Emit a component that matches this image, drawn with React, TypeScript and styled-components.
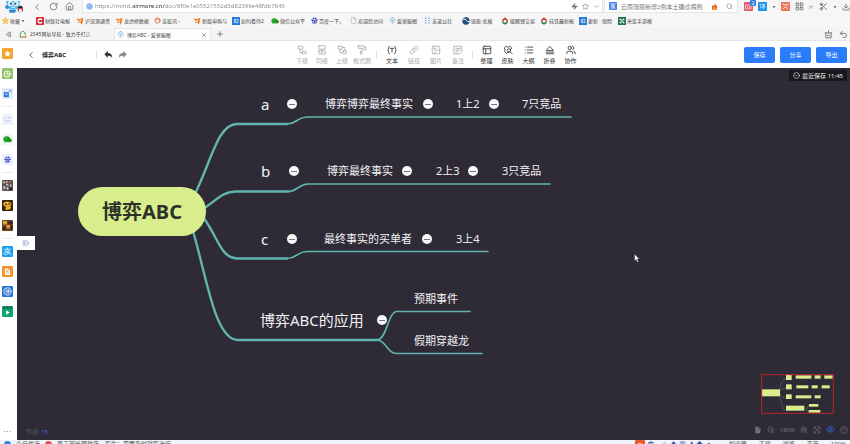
import React from "react";
import styled, { createGlobalStyle, css } from "styled-components";
import {
  ChevronLeft, ChevronDown, RotateCw, House, Zap, Star, Search, LayoutGrid, ChevronsRight, Scissors,
  Download, X, Plus, Undo2, Image as ImageIcon, PaintRoller, PanelsTopLeft,
  List, Users, CircleCheck, ZoomIn, ZoomOut, Eye, CircleHelp, File as FileIcon,
} from "lucide-react";

const ink = "#2e2b36";
const teal = "#62b5af";
const lime = "#d8ed8c";
const blue = "#2b7cfb";

const GlobalStyle = createGlobalStyle`
  * { box-sizing: border-box; }
  html, body { margin: 0; height: 100%; overflow: hidden; }
  body { font-family: "Noto Sans", "Noto Sans CJK SC", sans-serif; font-size: 6px; line-height: 8px; color: #444; background: #f6f6f6; }
  #root { height: 100%; }
  button { font: inherit; color: inherit; background: none; border: 0; padding: 0; margin: 0; display: inline-flex; align-items: center; justify-content: center; }
  input { font: inherit; color: inherit; border: 0; padding: 0; margin: 0; background: none; outline: none; min-width: 0; }
  a { color: inherit; text-decoration: none; }
  svg { display: block; flex: none; }
`;

const Window = styled.div`
  height: 100vh;
  display: flex;
  flex-direction: column;
`;

/* ---------- browser chrome ---------- */

const AddressRow = styled.div`
  height: 13px;
  flex: none;
  display: flex;
  align-items: center;
  padding: 0 0 0 4px;
  color: #777;
`;
const NavButtons = styled.nav`
  display: flex;
  gap: 7px;
  padding: 0 8px 0 8px;
  color: #666;
`;
const AddressBox = styled.label`
  flex: 1;
  height: 13px;
  display: flex;
  align-items: center;
  gap: 2px;
  padding: 0 2px 0 3px;
  background: #fff;
  border: 1px solid #e4e4e4;
  border-top: 0;
`;
const UrlInput = styled.input`
  flex: 1;
  height: 10px;
  color: transparent;
  background: linear-gradient(90deg, #888 0 38px, #222 38px 70px, #888 70px);
  background-clip: text;
  -webkit-background-clip: text;
`;
const SearchBox = styled.label`
  width: 134px;
  height: 13px;
  display: flex;
  align-items: center;
  gap: 4px;
  margin-left: 1px;
  padding: 0 4px 0 4px;
  background: #fff;
  border: 1px solid #e4e4e4;
  border-top: 0;
`;
const SearchInput = styled.input`
  width: 86px;
  height: 10px;
  color: #777;
`;
const BoxTools = styled.div`
  display: flex;
  gap: 4px;
`;
const Spacer = styled.span`
  flex: 1;
`;
const Extensions = styled.div`
  width: 112px;
  display: flex;
  align-items: center;
  justify-content: space-between;
  padding-left: 6px;
  color: #555;
`;
const AppTile = styled.span<{ $color: string; $size?: number }>`
  position: relative;
  width: ${(p) => p.$size ?? 9}px;
  height: ${(p) => p.$size ?? 9}px;
  border-radius: 1px;
  display: inline-flex;
  flex: none;
  align-items: center;
  justify-content: center;
  background: ${(p) => p.$color};
  color: #fff;
`;
const CountBadge = styled.span`
  position: absolute;
  top: -2px;
  right: -3px;
  width: 6px;
  height: 6px;
  border-radius: 1px;
  background: #2e7de8;
  font-size: 5px;
  line-height: 6px;
  text-align: center;
`;

const BookmarkRow = styled.nav`
  height: 15px;
  flex: none;
  display: flex;
  align-items: center;
  padding-left: 2px;
  font-size: 5px;
  color: #444;
`;
const Bookmark = styled.a<{ $width: number }>`
  width: ${(p) => p.$width}px;
  flex: none;
  display: flex;
  align-items: center;
  gap: 1px;
  white-space: nowrap;
`;

const TabRow = styled.div`
  height: 13px;
  flex: none;
  display: flex;
  align-items: stretch;
  font-size: 5px;
  background: #f4f4f4;
  border-bottom: 1px solid #e2e6ea;
  color: #555;
`;
const TabHandle = styled.button`
  width: 17px;
`;
const Tab = styled.div<{ $active?: boolean }>`
  width: 97px;
  display: flex;
  align-items: center;
  gap: 3px;
  padding: 0 3px 0 2px;
  color: #444;
  white-space: nowrap;
  ${(p) => p.$active && css`
    background: #fdfdfd;
    border: 1px solid #e6e6e6;
    border-bottom: 0;
  `}
`;
const TabTitle = styled.span<{ $fade?: boolean }>`
  flex: 1;
  ${(p) => p.$fade && css`
    flex: none;
    mask-image: linear-gradient(90deg, #000 85%, rgba(0, 0, 0, 0.3));
  `}
`;
const NewTab = styled.button`
  width: 17px;
`;
const TabTools = styled.div`
  margin-left: auto;
  display: flex;
  align-items: center;
  gap: 6px;
  padding-right: 2px;
`;

/* ---------- body ---------- */

const Body = styled.div`
  flex: 1;
  min-height: 0;
  display: flex;
`;
const SideBar = styled.aside`
  width: 17px;
  flex: none;
  display: flex;
  flex-direction: column;
  align-items: center;
  padding: 7px 3px 5px 0;
  background: #fff;
`;
const SideGroup = styled.div`
  display: flex;
  flex-direction: column;
  align-items: center;
  gap: 9px;
  padding-bottom: 7px;
  margin-bottom: 7px;
  border-bottom: 1px solid #ececec;
  &:last-of-type { border-bottom-color: transparent; margin-bottom: 0; }
`;
const MoreButton = styled.button`
  margin-top: auto;
  color: #5b87b5;
`;
const Main = styled.main`
  flex: 1;
  min-width: 0;
  display: flex;
  flex-direction: column;
`;
const Header = styled.header`
  height: 27px;
  flex: none;
  display: grid;
  grid-template-columns: 1fr auto 1fr;
  align-items: center;
  padding: 0 3px 0 9px;
  background: #fff;
`;
const TitleArea = styled.div`
  display: flex;
  align-items: center;
  color: #444;
`;
const DocTitle = styled.h1`
  margin: 0 30px 0 6px;
  font-size: 6px;
  line-height: 8px;
  font-weight: 700;
  color: #222;
`;
const Rule = styled.span<{ $width?: number }>`
  width: ${(p) => p.$width ?? 1}px;
  height: 8px;
  flex: none;
  background: linear-gradient(#ddd, #ddd) center / 1px 8px no-repeat;
`;
const History = styled.div`
  display: flex;
  gap: 5px;
  margin-left: 7px;
`;
const Toolbar = styled.div`
  display: flex;
  align-items: center;
`;
const ToolButton = styled.button<{ $width: number }>`
  width: ${(p) => p.$width}px;
  flex-direction: column;
  gap: 2px;
  white-space: nowrap;
  color: #333;
  &:disabled { color: #aaa; }
`;
const Actions = styled.div`
  display: flex;
  justify-content: flex-end;
  gap: 5px;
`;
const ActionButton = styled.button`
  width: 31px;
  height: 16px;
  border-radius: 2px;
  background: ${blue};
  color: #fff;
`;

/* ---------- mind map ---------- */

const Canvas = styled.section`
  position: relative;
  flex: 1;
  min-height: 0;
  overflow: hidden;
  background: ${ink};
`;
const Links = styled.svg`
  position: absolute;
  left: 0;
  top: 0;
`;
const Node = styled.div<{ $x: number; $y: number; $size: number }>`
  position: absolute;
  left: ${(p) => p.$x}px;
  top: ${(p) => p.$y}px;
  transform: translateY(-50%);
  font-size: ${(p) => p.$size}px;
  line-height: 20px;
  white-space: nowrap;
  color: #f2f2f4;
`;
const Root = styled.div`
  position: absolute;
  left: 61px;
  top: 119px;
  width: 128px;
  height: 49px;
  border-radius: 25px;
  display: flex;
  align-items: center;
  justify-content: center;
  background: ${lime};
  color: #2c3227;
  font-size: 20px;
  line-height: 28px;
  font-weight: 700;
`;
const Toggle = styled.button<{ $x: number; $y: number }>`
  position: absolute;
  left: ${(p) => p.$x - 5}px;
  top: ${(p) => p.$y - 5}px;
  width: 10px;
  height: 10px;
  border-radius: 50%;
  background: #f8f8f8;
  &::before { content: ""; width: 6px; height: 1px; background: #77757c; }
`;
const SavedNote = styled.div`
  position: absolute;
  right: 3px;
  top: 2px;
  height: 11px;
  display: flex;
  align-items: center;
  gap: 2px;
  padding: 0 4px;
  border-radius: 1px;
  background: #18171c;
  color: #eee;
`;
const PanelToggle = styled.button`
  position: absolute;
  left: 0;
  top: 168px;
  width: 18px;
  height: 14px;
  background: #fff;
  color: #8ea2d8;
`;
const NodeCount = styled.div`
  position: absolute;
  left: 9px;
  bottom: 4px;
  color: #5f5d67;
  b { color: #3f66d4; font-weight: 400; }
`;
const MiniMap = styled.div`
  position: absolute;
  right: 16px;
  bottom: 26px;
`;
const ViewTools = styled.div`
  position: absolute;
  right: 2px;
  bottom: 6px;
  display: flex;
  align-items: center;
  gap: 5px;
  color: #72707a;
`;
const EyeButton = styled.button`
  color: #2f6df0;
`;
const StatusBar = styled.footer`
  height: 4px;
  flex: none;
  display: flex;
  align-items: flex-start;
  gap: 5px;
  padding: 0 0 0 4px;
  font-size: 6px;
  background: #f1f4fa;
  color: #555;
  white-space: nowrap;
`;
const StatusDot = styled.span<{ $color: string }>`
  width: 7px;
  height: 7px;
  margin-top: 1px;
  flex: none;
  border-radius: 50%;
  background: ${(p) => p.$color};
`;
const InputMethod = styled.div`
  margin-left: auto;
  display: flex;
  gap: 3px;
  color: #2a55a8;
  font-weight: 700;
`;
const StatusItems = styled.div`
  display: flex;
  gap: 12px;
  padding: 0 4px 0 12px;
`;

/* ---------- drawings ---------- */

type IconProps = { size?: number; children: React.ReactNode; stroke?: string; fill?: string; w?: number };
const Icon = ({ size = 10, children, stroke = "currentColor", fill = "none", w = 2 }: IconProps) => (
  <svg width={size} height={size} viewBox="0 0 24 24" fill={fill} stroke={stroke} strokeWidth={w} strokeLinecap="round" strokeLinejoin="round" aria-hidden="true">
    {children}
  </svg>
);

const Mascot = () => (
  <svg width="20" height="12" viewBox="0 0 60 36" aria-hidden="true">
    <path d="M6 0h42l-2 13c-2 9-9 14-19 14S9 22 8 13z" fill="#4bb7f2" />
    <path d="M2 17l9-6 5 9-8 5zM14 27h23l-4 8H17z" fill="#3088d0" />
    <circle cx="19" cy="8" r="8" fill="#d8f0fc" /><circle cx="36" cy="8" r="8" fill="#d8f0fc" />
    <circle cx="21" cy="8" r="3" fill="#1d3a5c" /><circle cx="34" cy="8" r="3" fill="#1d3a5c" />
    <path d="M23 18q5 4 10 0" stroke="#fff" strokeWidth="3" fill="none" />
    <ellipse cx="49" cy="24" rx="8" ry="10" fill="#26262e" /><ellipse cx="49" cy="28" rx="5" ry="6" fill="#fff" />
    <path d="M41 21h16v4H41z" fill="#e0413c" />
  </svg>
);
const StarFolder = () => <Icon size={7} stroke="#eda62f" fill="#f9cd63"><path d="m12 2 3 7 8 1-6 5 2 8-7-4-7 4 2-8-6-5 8-1z" /></Icon>;
const RedC = () => <Icon size={8} stroke="none"><rect width="24" height="24" rx="2" fill="#d52c38" /><path d="M17 8a6 6 0 1 0 0 8" stroke="#fff" strokeWidth="4" /></Icon>;
const Fox = () => <Icon size={8} stroke="none" fill="#ef7a2b"><path d="M1 5 12 6l10-4-2 13-3 8-4-7-6 3 1-7z" /><path d="m8 12 9-5-5 8z" fill="#fff" /></Icon>;
const Swirl = () => <Icon size={7} stroke="#d7643e" w={3}><circle cx="12" cy="12" r="9" /><path d="M7 10c3-3 8-3 10 1" /></Icon>;
const BlueTen = () => <Icon size={8} stroke="#fff" w={2}><rect width="24" height="24" fill="#2279d8" stroke="none" /><path d="M7 7v10M12 7h6v10h-6z" /></Icon>;
const WeChat = ({ size = 8 }: { size?: number }) => <Icon size={size} stroke="none" fill="#2da52d"><ellipse cx="10" cy="11" rx="9" ry="7.5" /><ellipse cx="17" cy="14" rx="6.5" ry="5.5" fill="#249424" /><path d="m5 16-1 5 6-3z" /></Icon>;
const Paw = ({ size = 7 }: { size?: number }) => <Icon size={size} stroke="none" fill="#3743c4"><circle cx="4" cy="11" r="3" /><circle cx="9" cy="5" r="3" /><circle cx="16" cy="5" r="3" /><circle cx="20" cy="11" r="3" /><path d="M12 9c4 0 8 7 8 10s-4 4-8 3c-4 1-8 0-8-3s4-10 8-10z" /><path d="M9 15v4M14 15v4" stroke="#fff" strokeWidth="2" /></Icon>;
const Bulb = () => <Icon size={7} stroke="#55aee3" w={2}><path d="M12 2a9 9 0 0 0-5 16l5 4 5-4A9 9 0 0 0 12 2z" /><path d="M12 18v-7M8 9l4 3 4-3" /></Icon>;
const Dots = () => <Icon size={7} stroke="none" fill="#7ba9df"><path d="M3 2h5v5H3zM15 2h5v5h-5zM3 10h5v4H3zM15 10h5v4h-5zM3 17h5v5H3zM15 17h5v5h-5z" /></Icon>;
const Globe = () => <Icon size={8} stroke="none"><circle cx="12" cy="12" r="11" fill="#1f4f7d" /><path d="M3 7q8-3 10 3t9 4" stroke="#fff" strokeWidth="3" /></Icon>;
const RedGreen = () => <Icon size={8} stroke="none"><path d="M3 13A9 9 0 0 1 21 13z" fill="#d43b3b" /><path d="M3 13A9 9 0 0 0 21 13z" fill="#2d8a57" /><path d="M12 0v24" stroke="#9b3434" strokeWidth="2" /><circle cx="12" cy="13" r="4" fill="#fff" /></Icon>;
const GreenGrid = () => <Icon size={8} stroke="none"><rect width="24" height="24" fill="#20764f" /><path d="M5 5h5v5H5zM14 5h5v5h-5zM5 14h5v5H5zM14 14h5v5h-5zM10 10h4v4h-4z" fill="#fff" /></Icon>;
const GreenHouse = () => <Icon size={8} stroke="#4a9d4e" w={3}><path d="M4 21V9l7-6 8 6v5M4 21h7" /><path d="M14 19h8v3h-8z" stroke="#e4933a" /></Icon>;
const Flame = () => <Icon size={7} stroke="none" fill="#ee5a24"><path d="M13 0c1 6 8 8 8 15a9 9 0 0 1-18 0c0-4 2-6 4-8l2 4c3-3 4-6 4-11z" /><path d="M12 12c1 3 4 4 4 7a4 4 0 0 1-8 0c0-3 3-4 4-7z" fill="#fbc02d" /></Icon>;
const Caret = () => <Icon size={4} stroke="none" fill="#444"><path d="M3 7h18l-9 11z" /></Icon>;

const SubNode = () => <Icon><rect x="3" y="3" width="11" height="7" rx="1" /><rect x="13" y="15" width="9" height="6" rx="1" /><path d="M7 10v8h6" /></Icon>;
const PeerNode = () => <Icon><rect x="4" y="2" width="16" height="8" rx="1" /><rect x="4" y="14" width="16" height="8" rx="1" /><path d="M10 18h4M12 10v4" /></Icon>;
const ParentNode = () => <Icon><rect x="3" y="3" width="10" height="7" rx="1" /><path d="M7 10v8h6M13 6h6v8" /><rect x="14" y="14" width="8" height="7" rx="1" /></Icon>;
const TextMark = () => <Icon><path d="M6 3C2 3 5 10 2 12c3 2 0 9 4 9M18 3c4 0 1 7 4 9-3 2 0 9-4 9M8 8h8M12 8v9" /></Icon>;
const Chain = () => <Icon><path d="m9 14 6-6M11 7l3-3c4-4 10 2 6 6l-5 5c-2 2-4 1-5 0M13 17l-3 3c-4 4-10-2-6-6l5-5c2-2 4-1 5 0" /></Icon>;
const Note = () => <Icon><path d="M3 3h18v13l-5 5H3zM7 8h10M7 12h10M7 16h5" /></Icon>;
const Skin = () => <Icon><path d="M8 3 3 7l2 4-2 4 5 5 4-3 3 1M8 3c2 3 6 3 8 0l5 4-3 4" /><circle cx="14" cy="13" r="4" /><path d="m17 16 5 5" /></Icon>;
const Fold = () => <Icon><path d="m12 4 8 9H4zM3 17h18M3 21h18" /></Icon>;

const bookmarks: [string, () => React.ReactElement, number][] = [
  ["财联社电报", RedC, 40], ["沪深港通资", Fox, 39], ["龙虎榜数据", Fox, 39], ["韭投讯 -", Swirl, 39],
  ["新股申购与", Fox, 39], ["如何看待2", BlueTen, 39], ["微信公众平", WeChat, 40], ["百度一下，", Paw, 39],
  ["欢迎您访问", () => <FileIcon size={7} color="#aaa" />, 39], ["爱莫脑图", Bulb, 35], ["韭菜公社", Dots, 38],
  ["链能-北极", Globe, 39], ["碳酸锂交易", RedGreen, 39], ["硅铁最新报", RedGreen, 39], ["更新 · 保险", BlueTen, 39], ["米筐手游模", GreenGrid, 39],
];

const tools: { label: string; icon: React.ReactElement }[][] = [
  [
    { label: "下级", icon: <SubNode /> }, { label: "同级", icon: <PeerNode /> },
    { label: "上级", icon: <ParentNode /> }, { label: "格式刷", icon: <PaintRoller size={10} /> },
  ],
  [
    { label: "文本", icon: <TextMark /> }, { label: "链接", icon: <Chain /> },
    { label: "图片", icon: <ImageIcon size={10} /> }, { label: "备注", icon: <Note /> },
  ],
  [
    { label: "整理", icon: <PanelsTopLeft size={10} /> }, { label: "皮肤", icon: <Skin /> }, { label: "大纲", icon: <List size={10} /> },
    { label: "折叠", icon: <Fold /> }, { label: "协作", icon: <Users size={10} /> },
  ],
];
const toolWidths = [20, 22, 21];

const nodes: [string, number, number, number][] = [
  ["a", 244, 36, 15], ["博弈博弈最终事实", 308, 36, 11], ["1上2", 439, 36, 11], ["7只竞品", 505, 36, 11],
  ["b", 244, 103, 15], ["博弈最终事实", 310, 103, 11], ["2上3", 419, 103, 11], ["3只竞品", 485, 103, 11],
  ["c", 244, 171, 15], ["最终事实的买单者", 307, 171, 11], ["3上4", 439, 171, 11],
  ["博弈ABC的应用", 243, 252, 15], ["预期事件", 397, 231, 11], ["假期穿越龙", 397, 273, 11],
];
const toggles: [number, number][] = [
  [275, 36], [411, 36], [477, 36], [277, 103], [390, 103], [456, 103], [275, 171], [410, 171], [365, 252],
];

const sideIcons: React.ReactElement[][] = [
  [
    <AppTile key="fav" $color="#f6a42c" $size={11}><Icon size={7} stroke="none" fill="#fff"><path d="m12 1 3 7 8 1-6 6 2 8-7-4-7 4 2-8-6-6 8-1z" /></Icon></AppTile>,
    <AppTile key="time" $color="#96c36b" $size={11}><Icon size={8} stroke="#fff" w={3}><circle cx="12" cy="12" r="9" /><path d="M12 7v6h4" /></Icon></AppTile>,
    <AppTile key="news" $color="#dfe9fa" $size={11}><Icon size={11} stroke="none" fill="#3478dc"><path d="M4 9h11v11H4z" /><path d="M7 12h5v3H7z" fill="#bcd4fa" /><circle cx="18" cy="6" r="3" fill="#8cadec" /></Icon></AppTile>,
  ],
  [
    <AppTile key="smile" $color="#edf1fb" $size={11}><Icon size={9} stroke="#a2b4db"><path d="M5 7h4M15 7h4M6 15q6 4 12 0" /></Icon></AppTile>,
    <AppTile key="chat" $color="#edf9ed" $size={11}><WeChat size={9} /></AppTile>,
    <AppTile key="paw" $color="#edeffd" $size={11}><Paw size={7} /></AppTile>,
  ],
  [
    <AppTile key="g1" $color="#57504f" $size={11}><Icon size={11} stroke="none"><path d="M2 3h5v4H2zM9 8h5v4H9zM3 13h4v7H3zM17 10h4v4h-4zM10 15h4v6h-4zM9 2h3v4H9z" fill="#c9c4c0" /><path d="M15 2h6v5h-6z" fill="#b84f50" /><path d="M16 17h6v4h-6z" fill="#222" /></Icon></AppTile>,
    <AppTile key="g2" $color="#3c2107" $size={11}><Icon size={11} stroke="none"><path d="M2 7q9-8 19 0l-3 7-9 1-5-3zM8 16l12-2-2 6-10 2z" fill="#f2b630" /><path d="M7 8h4v3H7zM14 7h4v3h-4z" fill="#26160a" /></Icon></AppTile>,
    <AppTile key="g3" $color="#6b4016" $size={11}><Icon size={11} stroke="none"><path d="M2 2h9v8H2zM10 11h7v7h-7z" fill="#dfa43d" /><path d="M14 3h8v5h-8zM2 16h5v6H2zM19 12h4v9h-4z" fill="#2d2220" /></Icon></AppTile>,
  ],
  [
    <AppTile key="pay" $color="#1c9ff0" $size={11}><Icon size={9} stroke="#fff"><path d="M4 6h16M12 2v4M6 11h12c-2 7-12 12-15 8s6-8 19 1" /></Icon></AppTile>,
    <AppTile key="bag" $color="#f5932c" $size={11}><Icon size={9} stroke="none" fill="#fff"><path d="M5 4h8l6 5v12H5z" /><path d="M9 9v3h5V9M9 16h6" stroke="#f5932c" strokeWidth="2" /></Icon></AppTile>,
    <AppTile key="list" $color="#2474d8" $size={11}><Icon size={9} stroke="#fff"><circle cx="12" cy="12" r="10" /><path d="M8 8h9M8 12h9M8 16h5M15 8v9" /></Icon></AppTile>,
    <AppTile key="video" $color="#11a36c" $size={11}><Icon size={11} stroke="none"><path d="M3 1h4v5H3zM10 1h4v5h-4zM17 1h4v5h-4z" fill="#17513e" /><path d="m9 9 8 5-8 5z" fill="#fff" /></Icon></AppTile>,
  ],
];

const miniRects: [number, number, number, number][] = [
  [1, 45, 55, 21], [74, 1, 17, 16], [103, 3, 47, 10], [160, 3, 18, 10], [189, 3, 25, 10],
  [74, 30, 17, 15], [105, 33, 36, 9], [151, 33, 18, 9], [181, 33, 24, 9],
  [74, 60, 17, 14], [103, 63, 47, 9], [160, 63, 18, 9],
  [74, 94, 55, 15], [143, 89, 28, 8], [142, 107, 35, 8],
];

function BrowserChrome() {
  return (
    <>
      <AddressRow>
        <Mascot />
        <NavButtons>
          <button aria-label="后退"><ChevronLeft size={10} /></button>
          <button aria-label="刷新"><RotateCw size={9} /></button>
          <button aria-label="主页"><House size={9} /></button>
        </NavButtons>
        <AddressBox>
          <Icon size={7} stroke="#5f9fe0"><circle cx="12" cy="12" r="10" fill="#b9d8f5" /><path d="M4 9h16M4 15h16M12 2v20" /></Icon>
          <UrlInput aria-label="网址" defaultValue="https://mind.airmore.cn/doc/8f0e1a05521552d3d82399e48fdb7845" />
          <BoxTools>
            <Zap size={7} fill="#777" />
            <Star size={7} />
            <ChevronDown size={7} />
          </BoxTools>
        </AddressBox>
        <SearchBox>
          <AppTile $color="#4a84e8" $size={8}><Icon size={6} stroke="#fff" w={3}><path d="M4 4h16M4 20h16M6 12h12M12 6v12" /></Icon></AppTile>
          <SearchInput aria-label="搜索" defaultValue="云南瑞丽新增2例本土确诊病例" />
          <Flame />
          <Spacer />
          <Search size={7} />
        </SearchBox>
        <Extensions>
          <AppTile $color="#e95a67"><Icon size={7} stroke="#fff"><path d="M3 7h18v13H3zM8 12v4M15 12v4" /></Icon><CountBadge>2</CountBadge></AppTile>
          <AppTile $color="#1b93e6"><Icon size={7} stroke="#fff"><path d="M3 4h3v14l3-2M11 5h9l-8 6M14 5l7 6M11 14h10M16 9v12" /></Icon></AppTile>
          <Caret />
          <AppTile $color="#ee7359"><Icon size={7} stroke="#fff" w={3}><path d="M3 5q9 4 18 0M5 20q7-14 14 0" /></Icon></AppTile>
          <LayoutGrid size={9} />
          <ChevronsRight size={6} />
          <Scissors size={9} />
          <Caret />
          <Download size={8} />
        </Extensions>
      </AddressRow>
      <BookmarkRow aria-label="收藏">
        <Bookmark href="#" $width={34}><StarFolder />收藏 <Caret /></Bookmark>
        {bookmarks.map(([label, Mark, width]) => (
          <Bookmark href="#" key={label} $width={width}><Mark />{label}</Bookmark>
        ))}
      </BookmarkRow>
      <TabRow>
        <TabHandle aria-label="标签列表"><Icon size={7}><path d="M13 5 4 12l9 7zM19 4v16" /></Icon></TabHandle>
        <Tab><GreenHouse /><TabTitle $fade>2345网址导航 - 致力于打造</TabTitle></Tab>
        <Tab $active><Bulb /><TabTitle>博弈ABC - 爱莫脑图</TabTitle><button aria-label="关闭"><X size={6} /></button></Tab>
        <NewTab aria-label="新标签页"><Plus size={8} /></NewTab>
        <TabTools>
          <button aria-label="清理"><Icon size={9}><path d="M3 8h18M5 8v13h14V8M12 2v6M9 15h6" /></Icon></button>
          <button aria-label="恢复"><Undo2 size={9} /></button>
        </TabTools>
      </TabRow>
    </>
  );
}

function MindMap() {
  return (
    <Canvas aria-label="思维导图">
      <Links width="600" height="320" fill="none" stroke={teal} strokeLinecap="round">
        <g strokeWidth="2.4">
          <path d="M178 126C195 91 201 56 220 56H270" />
          <path d="M186 141C200 132 205 123.500 219 123.500H271" />
          <path d="M186 149C201 169 204 190.500 220 190.500H270" />
          <path d="M175 160C189 204 197 272 221 272H361" />
        </g>
        <g strokeWidth="1.6">
          <path d="M270 56C280 56 280 49 290 49H554" />
          <path d="M271 123.500C281 123.500 281 116 291 116H533" />
          <path d="M270 190.500C280 190.500 280 183.500 290 183.500H471" />
          <path d="M361 272C370 270 371 243.500 380 243.500H453" />
          <path d="M361 272C370 274 370 285.500 380 285.500H465" />
        </g>
      </Links>
      <Root>博弈ABC</Root>
      {nodes.map(([label, x, y, size]) => <Node key={label} $x={x} $y={y} $size={size}>{label}</Node>)}
      {toggles.map(([x, y]) => <Toggle key={`${x}-${y}`} $x={x} $y={y} aria-label="折叠分支" />)}
      <Links width="640" height="200" aria-hidden="true">
        <path d="M617.500 186v7l1.600-1.400 1.200 2.600 1.200-.6-1.200-2.500h2.100z" fill="#fff" stroke="#222" strokeWidth=".4" />
      </Links>
      <SavedNote><CircleCheck size={7} />最近保存 11:45</SavedNote>
      <PanelToggle aria-label="展开侧栏"><Icon size={8}><path d="M4 4v16M9 5h6q5 2 5 7t-5 7H9zM9 12h8" /></Icon></PanelToggle>
      <NodeCount>节点: <b>15</b></NodeCount>
      <MiniMap>
        <svg width="73" height="40" viewBox="-1 -1 219 120" fill="none" aria-hidden="true">
          <path d="M54 52Q60 14 74 14M54 52Q60 41 74 41M54 56Q62 73 74 73M54 58Q62 109 74 109M129 105h6l8-13M135 105l7 8" stroke="#5c6669" strokeWidth="2" />
          {miniRects.map(([x, y, w, h]) => <rect key={`${x}-${y}`} x={x} y={y} width={w} height={h} fill={lime} />)}
          <rect x="1" y="1" width="215" height="116" stroke="#b3252c" strokeWidth="3" />
        </svg>
      </MiniMap>
      <ViewTools>
        <button aria-label="定位"><Icon size={8}><path d="M5 3v18h13V10M5 3h6M11 3l9 6-5 1-2 5z" fill="currentColor" /></Icon></button>
        <button aria-label="缩小"><ZoomOut size={8} /></button>
        <span>180%</span>
        <button aria-label="放大"><ZoomIn size={8} /></button>
        <button aria-label="全屏"><Icon size={8}><path d="m3 3 18 18M21 3 3 21M3 9V3h6M15 3h6v6M21 15v6h-6M9 21H3v-6" /></Icon></button>
        <EyeButton aria-label="显示导航"><Eye size={9} /></EyeButton>
        <button aria-label="帮助"><CircleHelp size={8} /></button>
      </ViewTools>
    </Canvas>
  );
}

export default function App() {
  return (
    <Window>
      <GlobalStyle />
      <BrowserChrome />
      <Body>
        <SideBar>
          {sideIcons.map((group, i) => <SideGroup key={i}>{group}</SideGroup>)}
          <MoreButton aria-label="更多"><Icon size={7} stroke="none" fill="currentColor"><circle cx="3" cy="12" r="2" /><circle cx="12" cy="12" r="2" /><circle cx="21" cy="12" r="2" /></Icon></MoreButton>
        </SideBar>
        <Main>
          <Header>
            <TitleArea>
              <button aria-label="返回"><ChevronLeft size={10} /></button>
              <DocTitle>博弈ABC</DocTitle>
              <Rule />
              <History>
                <button aria-label="撤销"><Icon size={9} stroke="none" fill="#333"><path d="M10 2v6c8 0 12 4 12 13-3-5-6-6-12-6v6L1 11z" /></Icon></button>
                <button aria-label="重做"><Icon size={9} stroke="none" fill="#888"><path d="M14 2v6C6 8 2 12 2 21c3-5 6-6 12-6v6l9-10z" /></Icon></button>
              </History>
            </TitleArea>
            <Toolbar>
              {tools.map((group, i) => (
                <React.Fragment key={i}>
                  {i > 0 && <Rule $width={i === 1 ? 9 : 7} />}
                  {group.map((t) => (
                    <ToolButton key={t.label} $width={toolWidths[i]} disabled={i === 0 || (i === 1 && t.label !== "文本")}>
                      {t.icon}
                      {t.label}
                    </ToolButton>
                  ))}
                </React.Fragment>
              ))}
            </Toolbar>
            <Actions>
              <ActionButton>保存</ActionButton>
              <ActionButton>分享</ActionButton>
              <ActionButton>导出</ActionButton>
            </Actions>
          </Header>
          <MindMap />
        </Main>
      </Body>
      <StatusBar>
        <StatusDot $color="#2a8be0" />
        <span>今日优选</span>
        <StatusDot $color="#e0524f" />
        <span>男子因长期熬夜，医生：需要及时就医治疗</span>
        <InputMethod><AppTile $color="#ee5a2b" $size={10}>S</AppTile><span>中</span><span>·</span><span>☺</span><span>♦</span><span>▦</span><span>♟</span><span>◆</span><span>▪</span></InputMethod>
        <StatusItems><span>加速器</span><span>下载</span><span>浏览</span><span>声音</span><span>100%</span></StatusItems>
      </StatusBar>
    </Window>
  );
}
